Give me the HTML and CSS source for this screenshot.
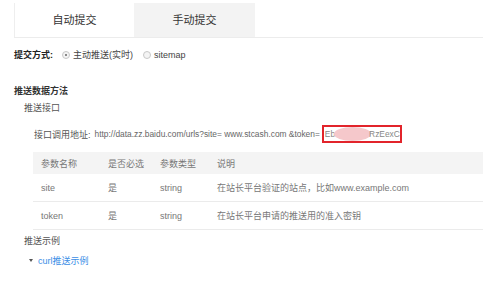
FILE: index.html
```html
<!DOCTYPE html>
<html lang="zh-CN">
<head>
    <meta charset="UTF-8">
    <title>链接提交</title>
    <link rel="stylesheet" href="styles.css">
</head>
<body>
    <div class="tabs">
        <div class="tab active">自动提交</div>
        <div class="tab">手动提交</div>
    </div>

    <div class="mode">
        <span class="mode-label">提交方式:</span>
        <span class="radio checked"></span><span class="radio-text">主动推送(实时)</span>
        <span class="radio"></span><span class="radio-text">sitemap</span>
    </div>

    <div class="section-title">推送数据方法</div>
    <div class="sub-title">推送接口</div>

    <div class="url">
        <span class="url-label">接口调用地址:</span>
        <span class="url-text">http://data.zz.baidu.com/urls?site= www.stcash.com &amp;token=</span>
        <span class="token">Eb<span class="blur"></span>RzEexC</span>
    </div>

    <table class="params">
        <thead>
            <tr>
                <th class="c1">参数名称</th>
                <th class="c2">是否必选</th>
                <th class="c3">参数类型</th>
                <th>说明</th>
            </tr>
        </thead>
        <tbody>
            <tr>
                <td>site</td>
                <td>是</td>
                <td>string</td>
                <td>在站长平台验证的站点，比如www.example.com</td>
            </tr>
            <tr>
                <td>token</td>
                <td>是</td>
                <td>string</td>
                <td>在站长平台申请的推送用的准入密钥</td>
            </tr>
        </tbody>
    </table>

    <div class="sub-title example">推送示例</div>
    <div class="curl"><span class="caret"></span><a href="#">curl推送示例</a></div>
</body>
</html>
```

FILE: styles.css
```css
body {
    margin: 0;
    padding-top: 3px;
    font-family: "Liberation Sans", "Noto Sans CJK SC", sans-serif;
    font-size: 9px;
    color: #666;
    background: #fff;
}
.tabs {
    display: flex;
    margin-left: 14px;
    width: 469px;
    height: 34px;
    border-bottom: 1px solid #ececec;
}
.tab {
    width: 121px;
    line-height: 34px;
    text-align: center;
    font-size: 11px;
    color: #333;
    background: #f3f3f3;
}
.tab.active {
    width: 119px;
    background: #fff;
    border-left: 1px solid #eee;
}
.mode {
    display: flex;
    align-items: center;
    margin: 8px 0 0 14px;
    height: 17px;
}
.mode-label {
    font-weight: bold;
    color: #222;
    margin-right: 9px;
}
.radio {
    width: 6px;
    height: 6px;
    border: 1px solid #c8c8c8;
    border-radius: 50%;
    background: #f4f4f4;
    margin-right: 3px;
    position: relative;
}
.radio.checked::after {
    content: "";
    position: absolute;
    left: 2px;
    top: 2px;
    width: 2px;
    height: 2px;
    border-radius: 50%;
    background: #666;
}
.radio-text {
    color: #444;
    margin-right: 10px;
}
.section-title {
    margin: 20px 0 0 14px;
    line-height: 16px;
    font-weight: bold;
    color: #333;
}
.sub-title {
    margin-left: 24px;
    line-height: 18px;
    color: #555;
}
.url {
    display: flex;
    align-items: center;
    margin: 7px 0 0 34px;
    height: 20px;
    white-space: pre;
}
.url-label {
    margin-right: 4px;
    color: #555;
}
.url-text {
    font-size: 8.4px;
}
.token {
    display: inline-flex;
    align-items: center;
    margin-left: 2px;
    width: 75px;
    height: 14px;
    border: 2px solid #e2242b;
    padding-left: 1px;
    color: #888;
    font-size: 8.4px;
    overflow: hidden;
}
.blur {
    display: inline-block;
    width: 40px;
    height: 14px;
    border-radius: 50%;
    background: #f5c8cb;
    margin: 0 -2px 0 -1px;
}
.params {
    margin: 8px 0 0 33px;
    width: 450px;
    border-collapse: collapse;
}
.params th {
    height: 22px;
    padding: 0 0 0 8px;
    background: #f4f4f4;
    text-align: left;
    font-weight: normal;
    color: #777;
}
.params td {
    height: 27px;
    padding: 0 0 0 8px;
    border-bottom: 1px solid #ebebeb;
    color: #777;
}
.params .c1 {
    width: 59px;
}
.params .c2 {
    width: 44px;
}
.params .c3 {
    width: 49px;
}
.example {
    margin-top: 2px;
}
.curl {
    display: flex;
    align-items: center;
    margin: 1px 0 0 29px;
    height: 18px;
}
.caret {
    width: 0;
    height: 0;
    border-left: 2px solid transparent;
    border-right: 2px solid transparent;
    border-top: 3px solid #555;
    margin-right: 5px;
}
.curl a {
    color: #3b8ee6;
    text-decoration: none;
}
```
